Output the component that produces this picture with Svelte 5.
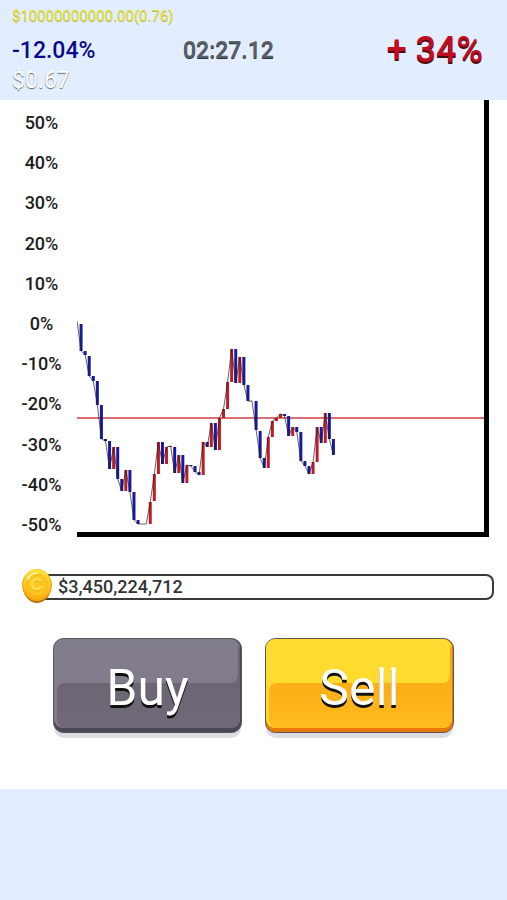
<script>
	const cash = '$10000000000.00(0.76)'
	const price = '$0.67'
	const balance = '$3,450,224,712'

	const labels = [50, 40, 30, 20, 10, 0, -10, -20, -30, -40, -50]

	// plot units, 40.2 units for every 10%
	const step = 4.07
	const startY = 221
	const averageY = 318

	// [open, close]
	const candles = [
		[224, 251], [251, 255], [256, 276], [276, 281], [281, 305], [305, 339], [339, 341],
		[341, 369], [369, 347], [347, 379], [379, 391], [391, 370], [370, 392], [392, 420],
		[420, 424], [424, 424], [424, 424], [424, 402], [401, 374], [374, 342], [342, 364],
		[364, 347], [347, 346], [347, 373], [373, 355], [355, 383], [383, 365], [365, 366],
		[366, 372], [372, 375], [375, 342], [342, 347], [347, 323], [323, 350], [350, 318],
		[318, 309], [309, 282], [282, 249], [249, 283], [283, 257], [257, 285], [285, 301],
		[301, 301], [301, 330], [331, 358], [358, 368], [368, 337], [337, 321], [321, 318],
		[318, 314], [314, 316], [316, 336], [336, 327], [327, 332], [332, 361], [361, 366],
		[366, 374], [374, 362], [362, 327], [327, 343], [343, 313], [313, 339], [339, 355]
	]

	const bars = candles.map(([open, close], i) => ({
		x: (i + 1) * step,
		open,
		close,
		up: close < open
	}))

	const line = [`0,${startY}`, ...bars.map((b) => `${b.x},${b.close}`)].join(' ')
</script>

{#snippet face(id, top, bottom, low, lowEnd, edge)}
	<svg class="face" viewBox="0 0 189 101" preserveAspectRatio="none" aria-hidden="true">
		<defs>
			<linearGradient id="{id}-top" x1="0" y1="0" x2="0" y2="1">
				<stop offset="0" stop-color={top} />
				<stop offset="1" stop-color={bottom} />
			</linearGradient>
			<linearGradient id="{id}-low" x1="0" y1="0" x2="0" y2="1">
				<stop offset="0" stop-color={low} />
				<stop offset="1" stop-color={lowEnd} />
			</linearGradient>
		</defs>
		<rect x="1" y="8" width="187" height="92" rx="10" fill="#dcdce2" />
		<rect x="0.5" y="0.5" width="188" height="94" rx="10" fill={edge} stroke="#5b5650" />
		<rect x="1" y="1" width="186" height="89" rx="9" fill="url(#{id}-top)" />
		<path
			d="M4 54Q4 45 13 45H177Q185 45 185 36V8Q187 8 187 12V80Q187 90 177 90H12Q4 90 4 80Z"
			fill="url(#{id}-low)"
		/>
	</svg>
{/snippet}

<main>
	<header>
		<div class="cash">{cash}</div>
		<div class="change">-12.04%</div>
		<time>02:27.12</time>
		<div class="gain">+ 34%</div>
		<div class="price">{price}</div>
	</header>

	<section class="game">
		<div class="chart">
			<ul>
				{#each labels as label}
					<li>{label}%</li>
				{/each}
			</ul>
			<div class="plot">
				<svg viewBox="0 0 407 432" preserveAspectRatio="none" role="img" aria-label="Price history">
					<line x1="0" x2="407" y1={averageY} y2={averageY} class="average" />
					{#each bars as b}
						<line x1={b.x} x2={b.x} y1={b.open} y2={b.close} class="bar" class:up={b.up} />
					{/each}
					<polyline points={line} />
				</svg>
			</div>
		</div>

		<div class="balance">
			<svg class="coin" viewBox="0 0 30 35" aria-hidden="true">
				<defs>
					<linearGradient id="coin" x1="0" y1="0" x2="0" y2="1">
						<stop offset="0" stop-color="#ffe23a" />
						<stop offset="1" stop-color="#fcae12" />
					</linearGradient>
				</defs>
				<ellipse cx="15" cy="18" rx="14" ry="16" fill="#b97509" />
				<ellipse cx="15" cy="16" rx="15" ry="16" fill="#f4a60d" />
				<ellipse cx="15" cy="15" rx="14" ry="15" fill="url(#coin)" />
				<ellipse cx="15" cy="16" rx="10" ry="11" fill="#fac61f" stroke="#f7b81c" />
				<path d="M6 10Q9 4 15 4" fill="none" stroke="#fff39a" stroke-width="2" stroke-linecap="round" />
				<path d="M19 13Q17 10 14 11Q10 12 10 16Q10 21 15 21Q18 21 19 18" fill="none" stroke="#efae1a" stroke-width="3" />
				<path d="M19 12Q17 9 14 10Q10 11 10 15Q10 20 15 20Q18 20 19 17" fill="none" stroke="#ffdc48" stroke-width="3" />
			</svg>
			<div class="amount">{balance}</div>
		</div>

		<div class="actions">
			<button>
				{@render face('buy', '#827d8c', '#817b8a', '#686270', '#706a78', '#4b465a')}
				<span>Buy</span>
			</button>
			<button>
				{@render face('sell', '#ffdc30', '#ffd92c', '#f9a310', '#ffbb1d', '#e87908')}
				<span>Sell</span>
			</button>
		</div>
	</section>
</main>

<style>
	:global(body) {
		background: #e2eeff;
	}
	main {
		min-height: 100vh;
		background: #e2eeff;
		font-family: Roboto, "Liberation Sans", sans-serif;
		font-weight: 500;
		color: #1c1c1c;
	}
	header {
		display: grid;
		grid-template-columns: 171px 1fr auto;
		grid-template-rows: 32px 36px 24px;
		align-items: center;
		padding: 0 24px 8px 12px;
		white-space: nowrap;
	}
	.cash {
		grid-column: 1 / -1;
		font-size: 15px;
		font-weight: 400;
		color: #e6e23a;
		text-shadow: 0 1px #b5b560;
	}
	.change {
		font-size: 23px;
		color: #0a0a8c;
	}
	time {
		font-size: 23px;
		color: #5a6068;
		text-shadow: 0 1px #2c3034;
	}
	.gain {
		font-size: 36px;
		color: #c00e20;
		text-shadow: 0 2px #4a0a10;
	}
	.price {
		font-size: 23px;
		font-weight: 400;
		color: #fff;
		text-shadow: 0 1px 1px #666;
	}
	.game {
		background: #fff;
		padding-bottom: 50px;
	}
	.chart {
		display: flex;
		align-items: flex-start;
		padding-right: 18px;
	}
	ul {
		display: flex;
		flex-direction: column;
		justify-content: space-between;
		box-sizing: border-box;
		width: 77px;
		height: 445px;
		margin: 0;
		padding: 3px 0 0 6px;
		list-style: none;
		text-align: center;
		font-size: 18px;
		line-height: 40px;
	}
	.plot {
		flex: 1;
		border-right: 5px solid #000;
		border-bottom: 5px solid #000;
	}
	.plot svg {
		display: block;
		width: 100%;
		height: 432px;
	}
	.average {
		stroke: #dc7070;
		stroke-width: 2;
	}
	.bar {
		stroke: #1818a0;
		stroke-width: 3;
	}
	.bar.up {
		stroke: #c01c28;
	}
	polyline {
		fill: none;
		stroke: #222;
		stroke-width: 1;
		stroke-opacity: 0.7;
	}
	.balance {
		display: flex;
		align-items: center;
		padding: 24px 13px 0 22px;
	}
	.coin {
		position: relative;
		flex: none;
		width: 30px;
		height: 35px;
	}
	.amount {
		flex: 1;
		margin-left: -14px;
		padding-left: 18px;
		border: 2px solid #3a3a3a;
		border-radius: 8px;
		font-size: 18px;
		line-height: 22px;
		color: #333;
	}
	.actions {
		display: flex;
		justify-content: center;
		gap: 23px;
		padding: 34px 24px 0;
	}
	button {
		display: grid;
		flex: 0 1 189px;
		padding: 0;
		border: 0;
		background: none;
		font: inherit;
		font-size: 50px;
		font-weight: 400;
		line-height: 101px;
		color: #fff;
		text-shadow: 0 3px #111;
		cursor: pointer;
	}
	.face,
	button span {
		grid-area: 1 / 1;
	}
	.face {
		width: 100%;
		height: 101px;
	}
	button:active {
		filter: brightness(0.9);
	}
</style>
